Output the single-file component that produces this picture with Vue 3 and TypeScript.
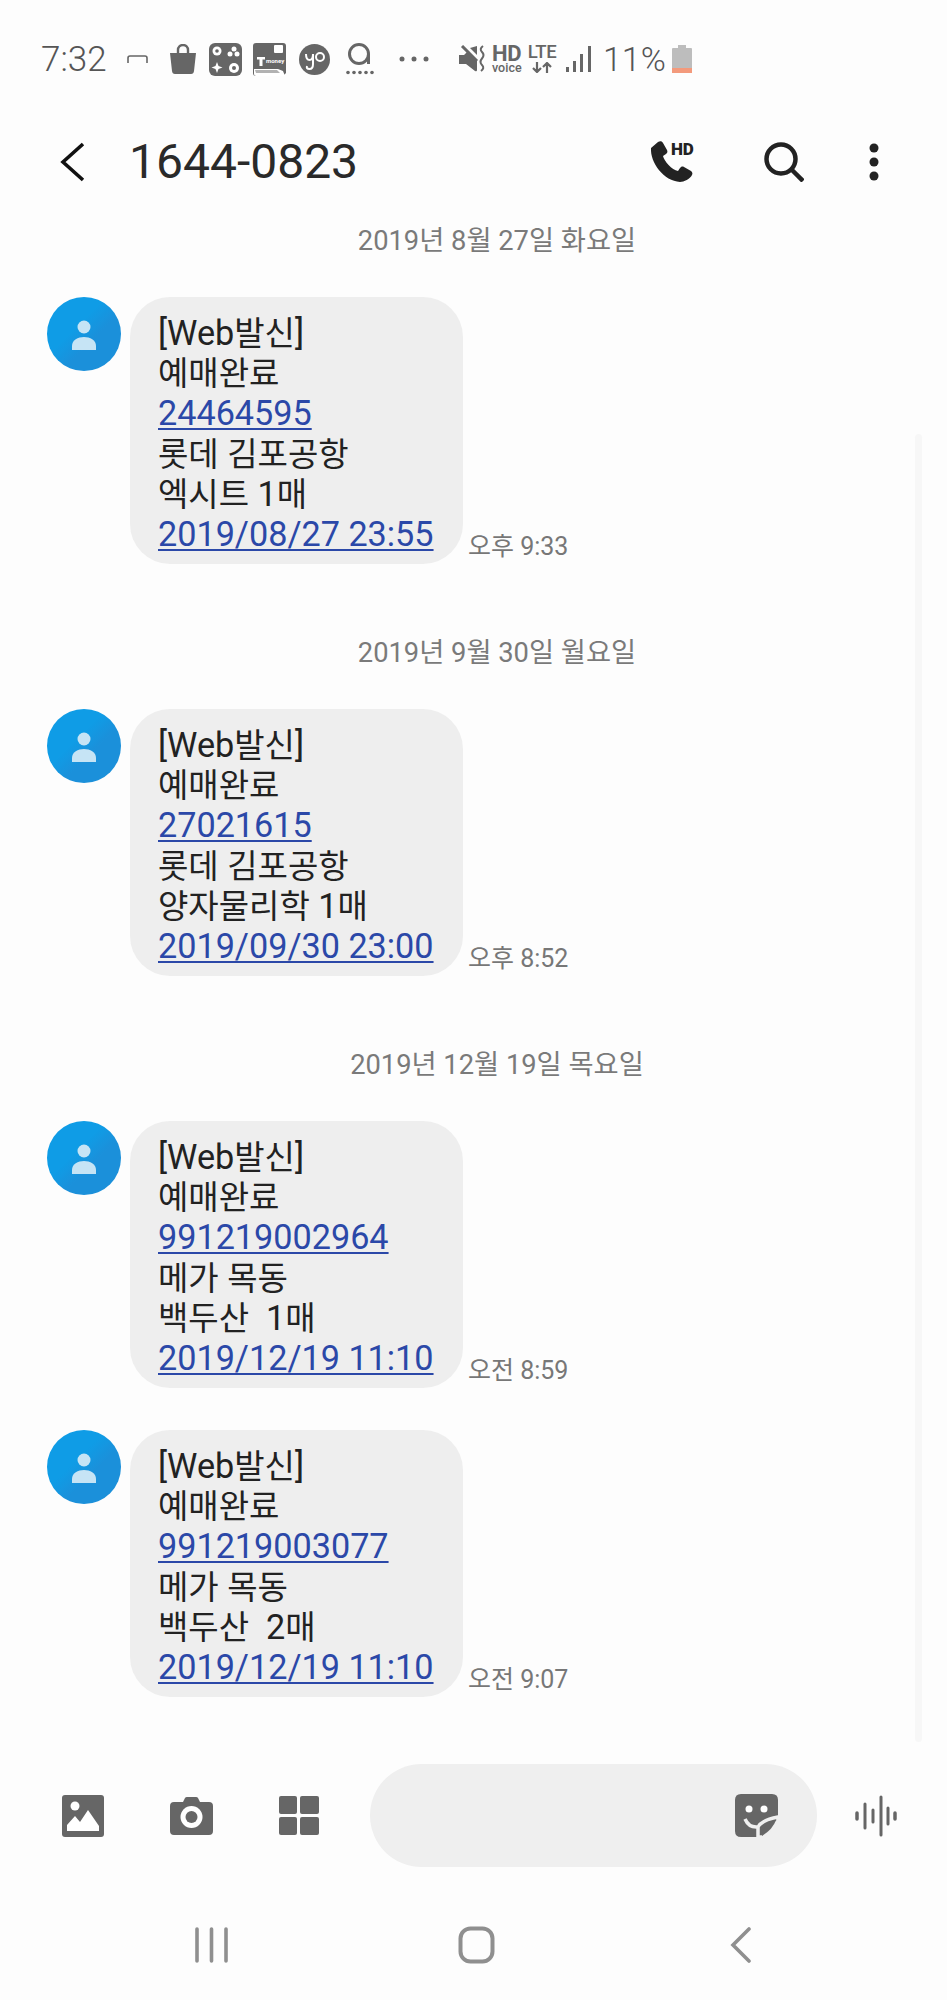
<script setup lang="ts">
interface Run { text: string; ko: boolean }
interface Msg {
  date?: string
  lines: { runs: Run[]; link?: boolean }[]
  time: string
}
const toRuns = (text: string): Run[] =>
  (text.match(/[가-힣]+|[^가-힣]+/g) ?? []).map((t) => ({ text: t, ko: /[가-힣]/.test(t) }))
const line = (text: string, link = false) => ({ runs: toRuns(text), link })
const msg = (id: string, place: string, movie: string, when: string, time: string, date?: string): Msg => ({
  date,
  time,
  lines: [line('[Web발신]'), line('예매완료'), line(id, true), line(place), line(movie), line(when, true)],
})
const messages: Msg[] = [
  msg('24464595', '롯데 김포공항', '엑시트 1매', '2019/08/27 23:55', '오후 9:33', '2019년 8월 27일 화요일'),
  msg('27021615', '롯데 김포공항', '양자물리학 1매', '2019/09/30 23:00', '오후 8:52', '2019년 9월 30일 월요일'),
  msg('991219002964', '메가 목동', '백두산  1매', '2019/12/19 11:10', '오전 8:59', '2019년 12월 19일 목요일'),
  msg('991219003077', '메가 목동', '백두산  2매', '2019/12/19 11:10', '오전 9:07'),
]
</script>

<template>
  <div class="screen">
    <div class="status">
      <span class="clock">7:32</span>
      <svg class="s-bracket" width="21" height="8" viewBox="0 0 21 8"><path d="M1 8V3q0-2 2-2h15q2 0 2 2v5" fill="none" stroke="#666" stroke-width="1.6"/></svg>
      <svg class="s-bag" width="28" height="30" viewBox="0 0 28 30"><path d="M9 10V6a5 5 0 0 1 10 0v4" fill="none" stroke="#666" stroke-width="2.4"/><path d="M1 9h26l-2 18q-.3 3-3 3H6q-2.700 0-3-3z" fill="#666"/></svg>
      <svg class="s-app1" width="33" height="33" viewBox="0 0 33 33"><rect width="33" height="33" rx="6" fill="#666"/><circle cx="8" cy="8" r="4.500" fill="#fff"/><circle cx="8" cy="8" r="1.800" fill="#666"/><circle cx="25" cy="6" r="2.500" fill="#fff"/><circle cx="21" cy="11" r="2.500" fill="#fff"/><circle cx="28" cy="11" r="2.500" fill="#fff"/><path d="M8 19l1.500 4 4 1.500-4 1.500-1.500 4-1.500-4-4-1.500 4-1.500z" fill="#fff"/><circle cx="25" cy="25" r="5" fill="#fff"/><circle cx="25" cy="25" r="2" fill="#666"/></svg>
      <svg class="s-app2" width="33" height="33" viewBox="0 0 33 33"><path d="M3 0h27q3 0 3 3v27l-3 3H3q-3 0-3-3V3q0-3 3-3z" fill="#666"/><path d="M1 26h24l5 2 2 5H3q-2 0-2-2z" fill="#fff"/><path d="M2 27h22l3 3H3z" fill="#666" opacity=".5"/><rect x="21" y="2" width="9" height="8" rx="1" fill="#fff"/><path d="M4 14h8v2.500H9.500V23h-3v-6.500H4z" fill="#fff"/><text x="13" y="20" class="tiny">money</text></svg>
      <svg class="s-yo" width="31" height="31" viewBox="0 0 31 31"><circle cx="15.500" cy="15.500" r="15.500" fill="#666"/><path d="M7 10q0 6 3.500 6t3.500-6M14 10v10q0 5-3.500 5T8 22" fill="none" stroke="#fff" stroke-width="2"/><circle cx="21" cy="13" r="4" fill="none" stroke="#fff" stroke-width="2"/></svg>
      <svg class="s-a" width="28" height="32" viewBox="0 0 28 32"><circle cx="13" cy="11" r="9.500" fill="none" stroke="#666" stroke-width="3"/><path d="M22.500 11v10" stroke="#666" stroke-width="3"/><g fill="#666"><circle cx="2" cy="29.500" r="1.800"/><circle cx="8" cy="29.500" r="1.800"/><circle cx="14" cy="29.500" r="1.800"/><circle cx="20" cy="29.500" r="1.800"/><circle cx="26" cy="29.500" r="1.800"/></g></svg>
      <svg class="s-dots" width="30" height="6" viewBox="0 0 30 6"><g fill="#666"><circle cx="3" cy="3" r="2.500"/><circle cx="15" cy="3" r="2.500"/><circle cx="27" cy="3" r="2.500"/></g></svg>
      <svg class="s-mute" width="29" height="28" viewBox="0 0 29 28"><path d="M1 10h5l3-3 10 9v9q0 2-2 1l-9-7H1z" fill="#666"/><path d="M4 1l15 15" stroke="#666" stroke-width="3"/><path d="M12 3l7-2v9z" fill="#666"/><path d="M25 1q-4 3-1 6t0 6.500 0 6.500-1 6" fill="none" stroke="#666" stroke-width="2"/></svg>
      <span class="hd"><b>HD</b><i>voice</i></span>
      <span class="lte"><b>LTE</b>
        <svg width="21" height="11" viewBox="0 0 21 11"><path d="M5 0v9M1 6l4 4 4-4M15 11V2M11 5l4-4 4 4" fill="none" stroke="#666" stroke-width="2.200"/></svg>
      </span>
      <svg class="s-signal" width="25" height="26" viewBox="0 0 25 26"><g fill="#666"><rect x="0" y="21" width="3" height="5"/><rect x="7" y="15" width="3" height="11"/><rect x="14" y="8" width="3" height="18"/><rect x="22" y="0" width="3" height="26"/></g></svg>
      <span class="batt-text">11%</span>
      <svg class="s-batt" width="20" height="28" viewBox="0 0 20 28"><path d="M6 0h8v3h5q1 0 1 1v24H0V4q0-1 1-1h5z" fill="#bdbdbd"/><rect y="23" width="20" height="5" fill="#f39a7c"/></svg>
    </div>

    <header class="head">
      <svg class="back" width="26" height="40" viewBox="0 0 26 40"><path d="M23 2L3 20l20 18" fill="none" stroke="#111" stroke-width="3.600"/></svg>
      <h1 class="title">1644-0823</h1>
      <div class="head-actions">
        <svg class="a-call" width="48" height="44" viewBox="0 0 48 44"><path d="M8 2L1 8C0 23 14 41 30 42c4 0 10-3 12-7 1-2 0-3-1-4l-7-4c-2-1-3 0-4 1l-2 3C22 30 14 21 13 16l3-2c1-1 2-2 1-4l-4-7c-1-2-3-2-5-1z" fill="#222"/><text x="21" y="15" class="hd-call">HD</text></svg>
        <svg class="a-search" width="40" height="40" viewBox="0 0 40 40"><circle cx="17" cy="17" r="14.500" fill="none" stroke="#222" stroke-width="4.500"/><path d="M27 27l12 12" stroke="#222" stroke-width="4.500"/></svg>
        <svg class="a-more" width="10" height="38" viewBox="0 0 10 38"><g fill="#222"><circle cx="5" cy="5" r="4.500"/><circle cx="5" cy="19" r="4.500"/><circle cx="5" cy="33" r="4.500"/></g></svg>
      </div>
    </header>

    <main class="list">
      <template v-for="(m, i) in messages" :key="i">
        <div v-if="m.date" class="date">{{ m.date }}</div>
        <div class="row" :class="{ follow: !m.date }">
          <div class="avatar">
            <svg width="24" height="30" viewBox="0 0 24 30"><circle cx="12" cy="7" r="6.500" fill="#c6e4f5"/><path d="M0 30v-4c0-6 6-9 12-9s12 3 12 9v4z" fill="#c6e4f5"/></svg>
          </div>
          <div class="bubble">
            <div v-for="(l, j) in m.lines" :key="j" class="line" :class="{ link: l.link }"><span v-for="(r, k) in l.runs" :key="k" :class="{ ko: r.ko }">{{ r.text }}</span></div>
          </div>
          <div class="time">{{ m.time }}</div>
        </div>
      </template>
    </main>

    <div class="scrollbar"></div>

    <div class="composer">
      <svg class="c-gallery" width="42" height="42" viewBox="0 0 42 42"><rect width="42" height="42" rx="3" fill="#666"/><circle cx="13" cy="11" r="4.500" fill="#fff"/><path d="M5 36v-6l8-9 5 6 8-12 11 16v5z" fill="#fff"/></svg>
      <svg class="c-camera" width="43" height="38" viewBox="0 0 43 38"><path d="M13 5l2-4q.5-1 2-1h9q1.500 0 2 1l2 4h9q4 0 4 4v25q0 4-4 4H4q-4 0-4-4V9q0-4 4-4z" fill="#666"/><circle cx="21.500" cy="20" r="11" fill="#fff"/><circle cx="21.500" cy="20" r="6" fill="#666"/></svg>
      <svg class="c-grid" width="40" height="39" viewBox="0 0 40 39"><g fill="#666"><rect width="18" height="18" rx="2"/><rect x="21" width="19" height="18" rx="2"/><rect y="21" width="18" height="18" rx="2"/><rect x="21" y="21" width="19" height="18" rx="2"/></g></svg>
      <div class="pill">
        <svg width="43" height="43" viewBox="0 0 43 43"><path d="M6 0h31q6 0 6 6v20L26 43H6q-6 0-6-6V6q0-6 6-6z" fill="#666"/><circle cx="14" cy="15" r="3.500" fill="#fff"/><circle cx="29" cy="15" r="3.500" fill="#fff"/><path d="M10 25q4 9 13 8 4-7 20-10v4L28 43h-5q0-5 0-10" fill="none" stroke="#efefef" stroke-width="3.500"/><path d="M27 42q0-12 14-16-3 9-14 16z" fill="#666"/></svg>
      </div>
      <svg class="c-voice" width="42" height="42" viewBox="0 0 42 42"><g stroke="#666" stroke-linecap="round" fill="none"><path d="M2 18v6" stroke-width="3.500"/><path d="M10 9v24" stroke-width="3"/><path d="M18 15v12" stroke-width="3"/><path d="M26 2v38" stroke-width="3"/><path d="M33 13v16" stroke-width="3"/><path d="M40 18v6" stroke-width="3.500"/></g></svg>
    </div>

    <nav class="nav">
      <svg width="33" height="36" viewBox="0 0 33 36"><g stroke="#8f8f8f" stroke-width="3.600" stroke-linecap="round"><path d="M2 2v32M16.500 2v32M31 2v32"/></g></svg>
      <svg width="37" height="38" viewBox="0 0 37 38"><rect x="2.500" y="2.500" width="32" height="33" rx="10" fill="none" stroke="#8f8f8f" stroke-width="4"/></svg>
      <svg width="21" height="36" viewBox="0 0 21 36"><path d="M19 2L3 18l16 16" fill="none" stroke="#8f8f8f" stroke-width="3.600" stroke-linecap="round"/></svg>
    </nav>
  </div>
</template>

<style>
html, body { margin: 0; background: #fdfdfd; }
</style>

<style scoped>
.screen {
  position: relative;
  width: 947px;
  height: 2000px;
  overflow: hidden;
  display: flex;
  flex-direction: column;
  background: #fdfdfd;
  font-family: Roboto, "Noto Sans CJK KR", sans-serif;
}
.status {
  height: 118px;
  flex: none;
  display: flex;
  align-items: center;
  padding-left: 41px;
  color: #666;
}
.clock { font-size: 35px; width: 86px; font-weight: 300; color: #555; }
.s-bracket { margin-top: -1px; flex: none; }
.s-bag { margin-left: 21px; flex: none; }
.s-app1 { margin-left: 12px; flex: none; }
.s-app2 { margin-left: 11px; flex: none; }
.s-yo { margin-left: 13px; flex: none; }
.s-a { margin-left: 16px; flex: none; }
.s-dots { margin-left: 25px; flex: none; }
.s-mute { margin-left: 29px; flex: none; }
.tiny { font-size: 6px; font-weight: 700; fill: #fff; }
.hd { margin-left: 5px; width: 30px; flex: none; display: flex; flex-direction: column; line-height: 1; color: #666; white-space: nowrap; }
.hd b { font-size: 22px; line-height: 16px; letter-spacing: -.3px; }
.hd i { font-style: normal; font-size: 12.500px; line-height: 11px; font-weight: 500; }
.lte { margin-left: 6px; width: 28px; flex: none; display: flex; flex-direction: column; align-items: center; }
.lte b { font-size: 18.500px; line-height: 15px; font-weight: 500; letter-spacing: -.3px; }
.lte svg { margin-top: 2px; }
.s-signal { margin-left: 10px; flex: none; }
.batt-text { margin-left: 12px; font-size: 34px; font-weight: 300; width: 63px; flex: none; color: #555; }
.s-batt { margin-left: 6px; margin-top: -1px; flex: none; }

.head {
  height: 88px;
  flex: none;
  display: flex;
  align-items: center;
  padding-left: 60px;
}
.back { flex: none; }
.title { margin: 0 0 0 43px; font-size: 48px; font-weight: 400; color: #2a2a2a; line-height: 1; }
.head-actions { display: flex; align-items: center; margin-left: auto; }
.a-call { margin-right: 66px; }
.a-search { margin-right: 65px; }
.a-more { margin-right: 68px; }
.hd-call { font-size: 17px; font-weight: 900; fill: #222; letter-spacing: -.3px; }

.list { flex: 1; padding-top: 15px; min-height: 0; }
.date {
  height: 40px;
  margin-bottom: 36px;
  font-size: 27.300px;
  line-height: 40px;
  color: #7a7a7a;
  text-align: center;
  box-sizing: border-box;
  padding-left: 47px;
}
.row { display: flex; align-items: flex-end; padding-left: 47px; margin-bottom: 69px; }
.row.follow { margin-top: -27px; }
.avatar {
  align-self: flex-start;
  flex: none;
  width: 74px;
  height: 74px;
  border-radius: 50%;
  background: linear-gradient(135deg, #0f9ce6 40%, #1b90da 60%);
  display: flex;
  align-items: center;
  justify-content: center;
}
.avatar svg { margin-top: 1px; }
.bubble {
  flex: none;
  margin-left: 9px;
  width: 333px;
  height: 267px;
  box-sizing: border-box;
  padding: 15.500px 0 0 28px;
  background: #eeeeee;
  border-radius: 40px;
  font-size: 34.200px;
  color: #222;
}
.line { height: 40.400px; line-height: 40.400px; white-space: pre; }
.ko { font-size: 33px; }
.link { color: #2b48a8; text-decoration: underline; text-underline-offset: 3px; text-decoration-thickness: 2px; }
.time { margin-left: 5px; font-size: 25px; line-height: 28px; color: #777; padding-bottom: 3px; white-space: nowrap; }

.scrollbar {
  position: absolute;
  left: 915px;
  top: 434px;
  width: 7px;
  height: 1308px;
  background: #f7f7f7;
  border-radius: 4px;
}
.composer {
  flex: none;
  height: 103px;
  display: flex;
  align-items: center;
  padding-left: 62px;
}
.c-camera { margin-left: 66px; }
.c-grid { margin-left: 66px; }
.pill {
  flex: none;
  width: 447px;
  height: 103px;
  margin-left: 51px;
  border-radius: 52px;
  background: #efefef;
  display: flex;
  align-items: center;
  justify-content: flex-end;
  padding-right: 39px;
  box-sizing: border-box;
}
.c-voice { margin-left: 38px; }
.nav {
  flex: none;
  height: 133px;
  display: flex;
  align-items: center;
  padding-top: 23px;
  box-sizing: border-box;
}
.nav svg:nth-child(1) { margin-left: 195px; }
.nav svg:nth-child(2) { margin-left: 230px; }
.nav svg:nth-child(3) { margin-left: 235px; }
</style>
